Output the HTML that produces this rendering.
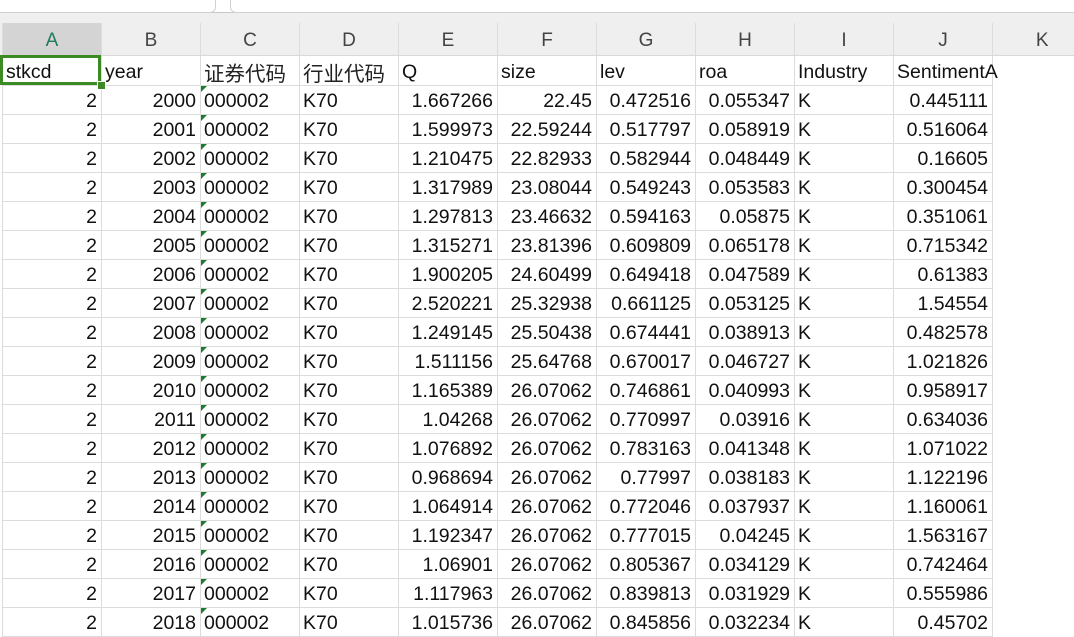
<!DOCTYPE html>
<html><head><meta charset="utf-8"><style>
body{margin:0;width:1074px;height:632px;overflow:hidden;background:#fff;font-family:"Liberation Sans","Noto Sans CJK SC",sans-serif;position:relative}
.top{position:absolute;left:0;top:0;width:1074px;height:12px;background:#fff;border-bottom:1px solid #c8c8c8}
.tab1{position:absolute;left:-10px;top:-10px;width:224px;height:21px;border:1px solid #d0d0d0;border-radius:6px;background:#fff}
.tab2{position:absolute;left:230px;top:-10px;width:900px;height:21px;border:1px solid #d0d0d0;border-radius:6px;background:#fff}
.hdrbg{position:absolute;left:0;top:13px;width:1074px;height:42px;background:#efefef;border-bottom:1px solid #d9d9d9}
table{position:absolute;left:2px;top:23px;border-collapse:collapse;table-layout:fixed;width:1089px}
col{width:99px}
td{padding:0 3px;height:29px;border:1px solid #dcdcdc;font-size:19.5px;line-height:22px;color:#111;white-space:nowrap;overflow:visible;box-sizing:border-box;padding-top:3px}
tr.h td{height:32px;text-align:center;color:#444;font-size:19px;border-top:none;background:#efefef;border-bottom:1px solid #d9d9d9;padding-top:4px}
tr.h td.sel{background:#d4d4d4;color:#1e7a5a}
tr.r1 td{height:30px}
td.n{text-align:right;padding-right:4px}
td.k{border:none}
tr.h td.k{border-left:1px solid #dcdcdc}
.cn{font-family:"Noto Sans CJK SC",sans-serif;font-size:20.5px;color:#222}
td.c{position:relative}
td.c:before{content:"";position:absolute;left:0;top:0;border-top:6px solid #1e7a2e;border-right:6px solid transparent}
.selbox{position:absolute;left:0;top:55px;width:101px;height:30px;box-sizing:border-box;border:3px solid #3b8a23}
.handle{position:absolute;left:97px;top:81px;width:7px;height:7px;background:#3b8a23;border:1px solid #fff}
</style></head><body>
<div class="top"><div class="tab1"></div><div class="tab2"></div></div>
<div class="hdrbg"></div>
<table>
<colgroup><col><col><col><col><col><col><col><col><col><col><col></colgroup>
<tr class="h"><td class="sel">A</td><td>B</td><td>C</td><td>D</td><td>E</td><td>F</td><td>G</td><td>H</td><td>I</td><td>J</td><td class="k">K</td></tr>
<tr class="r1"><td>stkcd</td><td>year</td><td class="cn">证券代码</td><td class="cn">行业代码</td><td>Q</td><td>size</td><td>lev</td><td>roa</td><td>Industry</td><td style="overflow:visible">SentimentA</td><td class="k"></td></tr>
<tr><td class="n">2</td><td class="n">2000</td><td class="c">000002</td><td>K70</td><td class="n">1.667266</td><td class="n">22.45</td><td class="n">0.472516</td><td class="n">0.055347</td><td>K</td><td class="n">0.445111</td><td class="k"></td></tr>
<tr><td class="n">2</td><td class="n">2001</td><td class="c">000002</td><td>K70</td><td class="n">1.599973</td><td class="n">22.59244</td><td class="n">0.517797</td><td class="n">0.058919</td><td>K</td><td class="n">0.516064</td><td class="k"></td></tr>
<tr><td class="n">2</td><td class="n">2002</td><td class="c">000002</td><td>K70</td><td class="n">1.210475</td><td class="n">22.82933</td><td class="n">0.582944</td><td class="n">0.048449</td><td>K</td><td class="n">0.16605</td><td class="k"></td></tr>
<tr><td class="n">2</td><td class="n">2003</td><td class="c">000002</td><td>K70</td><td class="n">1.317989</td><td class="n">23.08044</td><td class="n">0.549243</td><td class="n">0.053583</td><td>K</td><td class="n">0.300454</td><td class="k"></td></tr>
<tr><td class="n">2</td><td class="n">2004</td><td class="c">000002</td><td>K70</td><td class="n">1.297813</td><td class="n">23.46632</td><td class="n">0.594163</td><td class="n">0.05875</td><td>K</td><td class="n">0.351061</td><td class="k"></td></tr>
<tr><td class="n">2</td><td class="n">2005</td><td class="c">000002</td><td>K70</td><td class="n">1.315271</td><td class="n">23.81396</td><td class="n">0.609809</td><td class="n">0.065178</td><td>K</td><td class="n">0.715342</td><td class="k"></td></tr>
<tr><td class="n">2</td><td class="n">2006</td><td class="c">000002</td><td>K70</td><td class="n">1.900205</td><td class="n">24.60499</td><td class="n">0.649418</td><td class="n">0.047589</td><td>K</td><td class="n">0.61383</td><td class="k"></td></tr>
<tr><td class="n">2</td><td class="n">2007</td><td class="c">000002</td><td>K70</td><td class="n">2.520221</td><td class="n">25.32938</td><td class="n">0.661125</td><td class="n">0.053125</td><td>K</td><td class="n">1.54554</td><td class="k"></td></tr>
<tr><td class="n">2</td><td class="n">2008</td><td class="c">000002</td><td>K70</td><td class="n">1.249145</td><td class="n">25.50438</td><td class="n">0.674441</td><td class="n">0.038913</td><td>K</td><td class="n">0.482578</td><td class="k"></td></tr>
<tr><td class="n">2</td><td class="n">2009</td><td class="c">000002</td><td>K70</td><td class="n">1.511156</td><td class="n">25.64768</td><td class="n">0.670017</td><td class="n">0.046727</td><td>K</td><td class="n">1.021826</td><td class="k"></td></tr>
<tr><td class="n">2</td><td class="n">2010</td><td class="c">000002</td><td>K70</td><td class="n">1.165389</td><td class="n">26.07062</td><td class="n">0.746861</td><td class="n">0.040993</td><td>K</td><td class="n">0.958917</td><td class="k"></td></tr>
<tr><td class="n">2</td><td class="n">2011</td><td class="c">000002</td><td>K70</td><td class="n">1.04268</td><td class="n">26.07062</td><td class="n">0.770997</td><td class="n">0.03916</td><td>K</td><td class="n">0.634036</td><td class="k"></td></tr>
<tr><td class="n">2</td><td class="n">2012</td><td class="c">000002</td><td>K70</td><td class="n">1.076892</td><td class="n">26.07062</td><td class="n">0.783163</td><td class="n">0.041348</td><td>K</td><td class="n">1.071022</td><td class="k"></td></tr>
<tr><td class="n">2</td><td class="n">2013</td><td class="c">000002</td><td>K70</td><td class="n">0.968694</td><td class="n">26.07062</td><td class="n">0.77997</td><td class="n">0.038183</td><td>K</td><td class="n">1.122196</td><td class="k"></td></tr>
<tr><td class="n">2</td><td class="n">2014</td><td class="c">000002</td><td>K70</td><td class="n">1.064914</td><td class="n">26.07062</td><td class="n">0.772046</td><td class="n">0.037937</td><td>K</td><td class="n">1.160061</td><td class="k"></td></tr>
<tr><td class="n">2</td><td class="n">2015</td><td class="c">000002</td><td>K70</td><td class="n">1.192347</td><td class="n">26.07062</td><td class="n">0.777015</td><td class="n">0.04245</td><td>K</td><td class="n">1.563167</td><td class="k"></td></tr>
<tr><td class="n">2</td><td class="n">2016</td><td class="c">000002</td><td>K70</td><td class="n">1.06901</td><td class="n">26.07062</td><td class="n">0.805367</td><td class="n">0.034129</td><td>K</td><td class="n">0.742464</td><td class="k"></td></tr>
<tr><td class="n">2</td><td class="n">2017</td><td class="c">000002</td><td>K70</td><td class="n">1.117963</td><td class="n">26.07062</td><td class="n">0.839813</td><td class="n">0.031929</td><td>K</td><td class="n">0.555986</td><td class="k"></td></tr>
<tr><td class="n">2</td><td class="n">2018</td><td class="c">000002</td><td>K70</td><td class="n">1.015736</td><td class="n">26.07062</td><td class="n">0.845856</td><td class="n">0.032234</td><td>K</td><td class="n">0.45702</td><td class="k"></td></tr>
</table>
<div class="selbox"></div><div class="handle"></div>
</body></html>
